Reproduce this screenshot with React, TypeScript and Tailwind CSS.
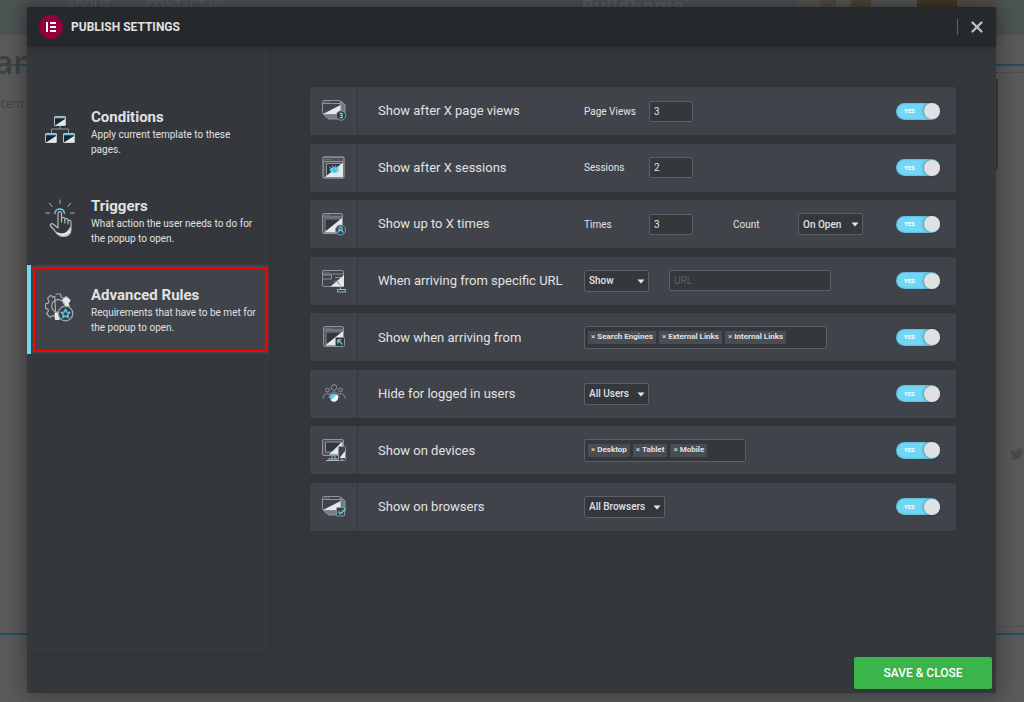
import React, { useState } from "react";
import { X } from "lucide-react";
import { FaTwitter } from "react-icons/fa";

const GREY = "#8d959c";
const LIGHT = "#e4e8eb";
const BLUE = "#62cbec";

const ConditionsIcon = () => (
  <svg width="30" height="30" viewBox="0 0 30 30" fill="none">
    <path d="M15 10v4M6.500 18v-4h17v4" stroke={GREY} />
    {[
      [9, 1],
      [0, 18],
      [18, 18],
    ].map(([x, y]) => (
      <g key={`${x}-${y}`}>
        <rect x={x + 0.5} y={y + 0.5} width="11" height="9" rx=".5" fill="#202326" stroke="#b7bec4" />
        <path d={`M${x + 1} ${y + 9.5}L${x + 11} ${y + 3}V${y + 9.5}Z`} fill={LIGHT} />
        <path d={`M${x + 1} ${y + 1.5}h10`} stroke={BLUE} strokeWidth="1.500" />
      </g>
    ))}
  </svg>
);

const TriggersIcon = () => (
  <svg width="30" height="40" viewBox="0 0 30 40" fill="none" strokeLinecap="round" strokeLinejoin="round">
    <path d="M15 1v3.500M4.500 4l2.500 3.500M25.500 4L23 7.500M.8 14h3.700M25.500 14h3.700" stroke="#a9b1b7" />
    <path d="M10 14.500c-.6-5.500 9-6.500 9.400-.3" stroke={BLUE} strokeWidth="1.500" />
    <path
      d="M13 28V14.500c0-2.500 3.500-2.500 3.500 0V23v-3c0-2.200 3.300-2 3.300.2V24v-3c0-2 3.200-2 3.200.3V25v-2.500c0-1.800 3-1.800 3 .4V31c0 4-3.500 6.500-8 6.500-4.200 0-6-2-8-5.500L5.500 27c-1-1.800 1.200-3.300 2.800-1.700L13 29"
      stroke="#b3bac0"
      strokeWidth="1.200"
    />
    <path d="M25.500 27v4c0 3.500-3 6-7 6-3.500 0-5.500-1-7.500-4.500 5 3 11 3 14.500-5.500z" fill={LIGHT} />
  </svg>
);

const AdvancedRulesIcon = () => (
  <svg width="30" height="30" viewBox="0 0 30 30" fill="none" strokeLinejoin="round">
    <path
      d="M10.500 1h5l.8 3.300 2 1 3-1.700L25 7l-1.500 2.500M11 26.500l-.8-3-2-.9-3 1.700-3.700-3.500 2-3-.8-1.900-2.200-.5v-4.500l2.700-.7.9-2L2.500 5.300l3-3 2.800 2 1.500-.8z"
      stroke="#a3abb1"
      strokeWidth="1.200"
    />
    <path d="M16.500 7.500l2-2 3-1.500L25.500 7.500 23.500 10.500l1.500 3h-4.500z" fill={LIGHT} />
    <path d="M9.500 20l3.500-1.500 2 6-.5 2.500h-4.500z" fill={LIGHT} />
    <path d="M12.500 19.500a6.500 6.500 0 1 1 7-8" stroke="#a3abb1" strokeWidth="1.200" />
    <circle cx="20.500" cy="20.500" r="7.300" fill="#404349" stroke="#a3abb1" strokeWidth="1.200" />
    <path d="M20.500 16.300l1.300 2.800 3 .3-2.200 2 .6 3-2.700-1.500-2.700 1.500.6-3-2.200-2 3-.3z" stroke={BLUE} strokeWidth="1.400" />
  </svg>
);

const RowSvg = ({ children }: { children: React.ReactNode }) => (
  <svg width="24" height="24" viewBox="0 0 24 24" fill="none" strokeLinejoin="round">
    {children}
  </svg>
);

// browser frame with the split dark/light pane, shared by most of the rule icons
const BrowserFrame = () => (
  <>
    <rect x=".5" y="1.500" width="20" height="20" rx="1.500" fill="#50545a" stroke={GREY} />
    <path d="M1 5h19" stroke={GREY} />
    <path d="M2.500 3.300h1M4.500 3.300h1M6.500 3.300h1" stroke={GREY} />
    <rect x="3" y="7" width="15" height="12" fill="#34383c" stroke={GREY} strokeWidth=".8" />
    <path d="M2 20.500L20 6v14.500z" fill={LIGHT} />
  </>
);

const StackedFrames = () => (
  <>
    <path d="M18 2.500h1.500l1.500 1.500 2 2v11l-4 3H7l-3-2-3-3" fill="#777c82" stroke={GREY} />
    <rect x=".5" y="1.500" width="18" height="13.500" rx="1.500" fill="#404349" stroke={GREY} />
    <path d="M1 4.500h17" stroke={GREY} />
    <path d="M2.500 3h1M4.500 3h1M6.500 3h1" stroke={GREY} />
    <path d="M1 15L18.500 6v7.500l-2 1.500z" fill={LIGHT} />
  </>
);

const PageViewsIcon = () => (
  <RowSvg>
    <StackedFrames />
    <circle cx="19" cy="16.500" r="4.700" fill="#34383c" stroke={GREY} />
    <path d="M17.500 14.300h2.700v4.400h-2.700M18 16.500h2" stroke={BLUE} strokeWidth="1.200" />
  </RowSvg>
);

const SessionsIcon = () => (
  <RowSvg>
    <rect x="1" y="1" width="21" height="21" rx="1.500" fill="#50545a" stroke={GREY} strokeWidth="1.300" />
    <path d="M2 5.500h19M3.500 3.500h1M5.500 3.500h1M7.500 3.500h1" stroke={GREY} />
    <rect x="4.500" y="7.500" width="14" height="12" fill="#34383c" stroke={GREY} />
    <path d="M3 21L21 6.500V21z" fill={LIGHT} />
    <path d="M7.500 14c2-4 7.500-4 9.500 0-2 4-7.500 4-9.500 0z" fill={BLUE} />
    <path d="M8.500 12.500l-1-1.700M10.700 11V9.300M13.800 11V9.300M16 12.500l1-1.700" stroke={BLUE} />
    <circle cx="12.300" cy="14" r="1.200" fill="#4fb4d6" />
  </RowSvg>
);

const TimesIcon = () => (
  <RowSvg>
    <BrowserFrame />
    <circle cx="18.500" cy="18" r="5" fill="#404349" stroke={GREY} />
    <circle cx="18.500" cy="16.500" r="1.600" stroke={BLUE} strokeWidth="1.200" />
    <path d="M15.800 20.800c.4-3.200 5-3.200 5.400 0" stroke={BLUE} strokeWidth="1.200" />
  </RowSvg>
);

const UrlIcon = () => (
  <RowSvg>
    <rect x=".5" y="1.500" width="21" height="16" rx="1.500" stroke={GREY} />
    <path d="M1 5h20M2.500 3.300h1M4.500 3.300h1M6.500 3.300h1" stroke={GREY} />
    <path d="M1 10h8.500V6H1M13 8.500h6" stroke={GREY} />
    <path d="M8.500 17.500L22 6v11.500z" fill={LIGHT} />
    <path d="M10.500 13l4-1.500 3 4" stroke="#6b7177" />
    <path d="M18.500 17v3.500" stroke={GREY} />
    <rect x="15.500" y="20.500" width="8" height="2.500" stroke={BLUE} />
  </RowSvg>
);

const ArrivingIcon = () => (
  <RowSvg>
    <g transform="translate(1 0)">
      <BrowserFrame />
    </g>
    <rect x="13.500" y="12.500" width="9" height="9" rx="1" fill="#34383c" stroke={GREY} />
    <path d="M20.500 19.500l-4.500-4.500M15.800 18.500v-3.700h3.700" stroke={BLUE} strokeWidth="1.200" />
  </RowSvg>
);

const UsersIcon = () => (
  <RowSvg>
    <circle cx="12" cy="5.500" r="2.800" stroke={GREY} />
    <circle cx="5.500" cy="8" r="1.900" stroke={GREY} />
    <circle cx="18.500" cy="8" r="1.900" stroke={GREY} />
    <path d="M1 16.500c0-5 6-6.500 7.500-3M23 16.500c0-5-6-6.500-7.500-3" stroke={GREY} />
    <path d="M7 16c0-8 10-8 10 0" stroke={GREY} />
    <circle cx="12" cy="15.500" r="4" fill={BLUE} />
    <path d="M9 18.300L14.800 12.700A4 4 0 0 1 9 18.300z" fill="#fff" />
  </RowSvg>
);

const DevicesIcon = () => (
  <RowSvg>
    <rect x=".5" y="1.500" width="21" height="16" rx="1.500" fill="#50545a" stroke={GREY} />
    <rect x="3.500" y="4" width="15" height="10" fill="#34383c" stroke={GREY} />
    <path d="M7 16.500L20.500 3.500v13z" fill={LIGHT} />
    <path d="M10 17.500v3.500M13 17.500v3.500" stroke={BLUE} />
    <path d="M4 22.500h13M6 21h10" stroke="#b7bdc2" />
    <rect x="16.500" y="8.500" width="7" height="14" rx="1" fill="#404349" stroke={GREY} />
    <path d="M17.500 20l5.500-7v7z" fill={LIGHT} />
    <path d="M19 21.300h2" stroke={BLUE} />
  </RowSvg>
);

const BrowsersIcon = () => (
  <RowSvg>
    <StackedFrames />
    <rect x="14.500" y="12.500" width="8" height="8.500" rx="1" fill="#404349" stroke={GREY} />
    <path d="M16.500 16.500l2 2.300 5-5.300" stroke={BLUE} strokeWidth="1.400" />
  </RowSvg>
);

const tabs = [
  { title: "Conditions", text: "Apply current template to these pages.", Icon: ConditionsIcon },
  { title: "Triggers", text: "What action the user needs to do for the popup to open.", Icon: TriggersIcon },
  { title: "Advanced Rules", text: "Requirements that have to be met for the popup to open.", Icon: AdvancedRulesIcon },
];

const NumberField = ({ id, label, initial }: { id: string; label: string; initial: string }) => (
  <div className="flex items-center">
    <label htmlFor={id} className="w-[65px] text-[10px]">
      {label}
    </label>
    <input
      id={id}
      type="text"
      inputMode="numeric"
      defaultValue={initial}
      className="h-[21px] w-[44px] rounded-xs border border-[#5d6064] bg-[#34383c] px-1 text-[10px] outline-none"
    />
  </div>
);

const SelectField = ({ id, label, options, width }: { id: string; label: string; options: string[]; width: string }) => (
  <div className={`relative ${width}`}>
    <select
      id={id}
      aria-label={label}
      className="block h-[22px] w-full appearance-none rounded-xs border border-[#5d6064] bg-[#34383c] px-1 text-[10px] font-medium outline-none"
    >
      {options.map((o) => (
        <option key={o}>{o}</option>
      ))}
    </select>
    <svg className="pointer-events-none absolute top-[9px] right-1" width="8" height="5" viewBox="0 0 8 5">
      <path d="M.5.5h7L4 4.500z" fill="#e6e9ec" />
    </svg>
  </div>
);

const TagsField = ({ label, initial, width }: { label: string; initial: string[]; width: string }) => {
  const [tags, setTags] = useState(initial);

  return (
    <div className={`flex h-[23px] items-center gap-[3px] rounded-xs border border-[#5d6064] bg-[#34383c] px-[3px] ${width}`}>
      {tags.map((tag) => (
        <span key={tag} className="flex h-[13px] items-center gap-0.5 bg-[#494c52] px-[3px] text-[8px] leading-none font-bold whitespace-nowrap">
          <button
            type="button"
            aria-label={`Remove ${tag}`}
            className="font-normal"
            onClick={() => setTags(tags.filter((t) => t !== tag))}
          >
            ×
          </button>
          {tag}
        </span>
      ))}
      <input type="text" aria-label={label} className="w-0 min-w-0 flex-1 bg-transparent text-[10px] outline-none" />
    </div>
  );
};

const Toggle = ({ label }: { label: string }) => (
  <label className="relative ml-auto flex h-[17px] w-[44px] shrink-0 cursor-pointer items-center rounded-full bg-[#6a6d72] shadow-[inset_0_0_2px_rgba(0,0,0,0.4)] has-checked:bg-[#71d7f7]">
    <input type="checkbox" defaultChecked aria-label={label} className="peer sr-only" />
    <span className="flex-1 pl-2 text-[6px] leading-none font-bold text-white opacity-0 peer-checked:opacity-100">YES</span>
    <span className="size-4 rounded-full bg-[#e0e1e3] shadow-[-1px_0_3px_rgba(0,0,0,0.3)]" />
  </label>
);

const rules = [
  {
    title: "Show after X page views",
    Icon: PageViewsIcon,
    controls: <NumberField id="page-views" label="Page Views" initial="3" />,
  },
  {
    title: "Show after X sessions",
    Icon: SessionsIcon,
    controls: <NumberField id="sessions" label="Sessions" initial="2" />,
  },
  {
    title: "Show up to X times",
    Icon: TimesIcon,
    controls: (
      <div className="flex items-center gap-10">
        <NumberField id="times" label="Times" initial="3" />
        <div className="flex items-center">
          <label htmlFor="count" className="w-[65px] text-[10px]">
            Count
          </label>
          <SelectField id="count" label="Count" options={["On Open", "On Close"]} width="w-[65px]" />
        </div>
      </div>
    ),
  },
  {
    title: "When arriving from specific URL",
    Icon: UrlIcon,
    controls: (
      <div className="flex items-center gap-5">
        <SelectField id="url-action" label="URL action" options={["Show", "Hide"]} width="w-[65px]" />
        <input
          type="text"
          aria-label="URL"
          placeholder="URL"
          className="h-[21px] w-[162px] rounded-xs border border-[#5d6064] bg-[#34383c] px-1 text-[10px] outline-none placeholder:text-[#5d6166]"
        />
      </div>
    ),
  },
  {
    title: "Show when arriving from",
    Icon: ArrivingIcon,
    controls: (
      <TagsField label="Sources" initial={["Search Engines", "External Links", "Internal Links"]} width="w-[243px]" />
    ),
  },
  {
    title: "Hide for logged in users",
    Icon: UsersIcon,
    controls: <SelectField id="users" label="Users" options={["All Users", "Custom"]} width="w-[65px]" />,
  },
  {
    title: "Show on devices",
    Icon: DevicesIcon,
    controls: <TagsField label="Devices" initial={["Desktop", "Tablet", "Mobile"]} width="w-[162px]" />,
  },
  {
    title: "Show on browsers",
    Icon: BrowsersIcon,
    controls: <SelectField id="browsers" label="Browsers" options={["All Browsers", "Custom"]} width="w-[81px]" />,
  },
];

// dimmed page behind the dialog
const PageBehind = () => (
  <div aria-hidden="true" className="col-start-1 row-start-1 flex flex-col overflow-hidden bg-[#5b5b5b] font-['Open_Sans',sans-serif]">
    <div className="flex h-[35px] items-start bg-[#4d5454] text-[#5c6262]">
      <div className="flex flex-1 gap-9 pl-[67px] text-[13px] leading-[8px]">
        <span>ABOUT</span>
        <span>CONTACT US</span>
      </div>
      <div className="w-[217px] text-[19px] leading-3 font-bold">Buildhome</div>
      <div className="flex h-full w-[200px]">
        <div className="w-[22px] bg-[#575654]" />
        <div className="w-4 bg-[#504d45]" />
        <div className="w-[15px] bg-[#575857]" />
        <div className="w-5 bg-[#4a4637]" />
        <div className="w-[46px] bg-[#555857]" />
        <div className="w-10 bg-[#43382a]" />
        <div className="flex-1 bg-[#53504e]" />
      </div>
      <div className="w-[26px]" />
    </div>
    <div className="mt-[29px] flex flex-1 justify-between border-y-2 border-[#254f5d]">
      <div className="flex w-[27px] flex-col items-end text-[#3f4142]">
        <div className="-mt-6 text-[32px] leading-10 font-semibold">ar</div>
        <div className="mt-3 pr-[3px] text-[12px] leading-5 text-[#444]">content</div>
      </div>
      <div className="my-1.5 flex w-[28px] flex-col border-y border-dashed border-[#4b4b4b]">
        <div className="mt-1.5 h-[90px] w-0.5 bg-[#46372f]" />
        <FaTwitter className="mt-[278px] self-end text-[14px] text-[#4a4b4c]" />
      </div>
    </div>
    <div className="h-[67px]" />
  </div>
);

const App: React.FC = () => {
  const [active, setActive] = useState("Advanced Rules");

  return (
    <div className="grid min-h-screen font-[Roboto,sans-serif] text-[#e0e1e3]">
      <PageBehind />

      <div
        role="dialog"
        aria-labelledby="dialog-title"
        className="z-10 col-start-1 row-start-1 mt-[7px] mr-7 mb-[9px] ml-[27px] flex flex-col rounded-xs bg-[#34383c] shadow-[0_2px_24px_4px_rgba(0,0,0,0.3)]"
      >
        <header className="z-10 flex h-10 items-center rounded-t-xs bg-[#26292c] px-3 shadow-[0_0_8px_rgba(0,0,0,0.2)]">
          <svg width="24" height="24" viewBox="0 0 24 24">
            <circle cx="12" cy="12" r="12" fill="#93003c" />
            <path d="M7 7h2v10H7zM11 7h6v2h-6zM11 11h6v2h-6zM11 15h6v2h-6z" fill="#fff" />
          </svg>
          <h1 id="dialog-title" className="ml-2 flex-1 text-[12px] font-bold">
            PUBLISH SETTINGS
          </h1>
          <div className="h-4 w-px bg-[#5f6468]" />
          <button type="button" aria-label="Close" className="-mr-0.5 ml-2.5 text-[#b9c3ca]">
            <X size={18} strokeWidth={3} />
          </button>
        </header>

        <div className="flex flex-1">
          <nav className="w-[242px] shrink-0 pt-10 shadow-[0_0_8px_rgba(0,0,0,0.12)]">
            {tabs.map(({ title, text, Icon }) => (
              <button
                key={title}
                type="button"
                onClick={() => setActive(title)}
                className={`block w-full border-l-4 p-0.5 text-left ${
                  active === title ? "border-[#71d7f7] bg-[#404349]" : "border-transparent"
                }`}
              >
                <span
                  className={`flex h-[85px] items-center gap-4 border-2 pr-2 pl-2.5 ${
                    active === title ? "border-[#fe0000]" : "border-transparent"
                  }`}
                >
                  <span className="flex w-[30px] shrink-0 justify-center pb-1">
                    <Icon />
                  </span>
                  <span>
                    <span className="block text-[15px] leading-5 font-bold">{title}</span>
                    <span className="block text-[10px] leading-[15px]">{text}</span>
                  </span>
                </span>
              </button>
            ))}
          </nav>

          <main className="flex-1 pt-10 pr-10 pl-[41px]">
            <ul className="flex min-h-[444px] flex-col justify-between">
              {rules.map(({ title, Icon, controls }) => (
                <li key={title} className="flex h-12 items-center rounded-xs bg-[#404349] pr-4 shadow-[0_0_8px_rgba(0,0,0,0.1)]">
                  <div className="flex h-full w-12 items-center justify-center border-r border-[#34383c]">
                    <Icon />
                  </div>
                  <h2 className="w-[226px] shrink-0 pl-5 text-[13px]">{title}</h2>
                  {controls}
                  <Toggle label={title} />
                </li>
              ))}
            </ul>
          </main>
        </div>

        <footer className="flex h-[41px] items-center justify-end border-t border-[#303337] pr-1">
          <button type="button" className="h-8 w-[138px] rounded-xs bg-[#39b54a] text-[12px] font-medium text-white">
            SAVE &amp; CLOSE
          </button>
        </footer>
      </div>
    </div>
  );
};

export default App;
